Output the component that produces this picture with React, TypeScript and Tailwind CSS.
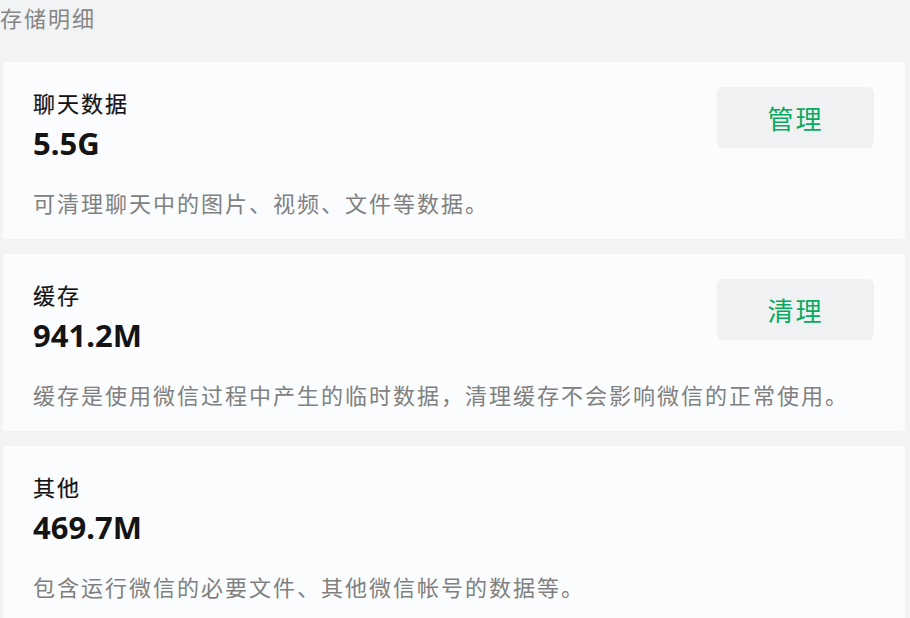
import React from 'react';

type Item = {
    title: string;
    size: string;
    desc: string;
    action?: string;
};

const items: Item[] = [
    {title: '聊天数据', size: '5.5G', desc: '可清理聊天中的图片、视频、文件等数据。', action: '管理'},
    {title: '缓存', size: '941.2M', desc: '缓存是使用微信过程中产生的临时数据，清理缓存不会影响微信的正常使用。', action: '清理'},
    {title: '其他', size: '469.7M', desc: '包含运行微信的必要文件、其他微信帐号的数据等。'},
];

const font = {fontFamily: '"Noto Sans", "Noto Sans CJK SC", sans-serif'};

const StorageCard: React.FC<{item: Item}> = ({item}) => (
    <div className="flex flex-col bg-[#fbfcfe] rounded-[4px] pl-[30px] pr-[31px] pt-[25px] h-[177px]">
        {/* 상단: 제목 + 버튼 */}
        <div className="flex justify-between items-start">
            <div className="flex flex-col">
                <div className="mt-[1px] text-[22px] leading-[30px] tracking-[2px] text-[#141416] [-webkit-text-stroke:0.2px_#141416]">{item.title}</div>
                <div className="mt-[7px] text-[31px] leading-[36px] font-bold text-[#141414]">{item.size}</div>
            </div>
            {item.action && (
                <button className="w-[157px] h-[61px] shrink-0 rounded-[6px] bg-[#f0f1f3] pt-[3px] text-[26px] leading-[58px] tracking-[2px] text-[#0aa960]">
                    {item.action}
                </button>
            )}
        </div>
        <div className="mt-[27px] text-[22px] leading-[30px] tracking-[2px] text-[#808080] whitespace-nowrap">{item.desc}</div>
    </div>
);

const App: React.FC = () => {
    return (
        <div className="w-[910px] h-[618px] overflow-hidden bg-[#f2f3f5] pl-[3px] pr-[5px]" style={font}>
            <div className="-ml-[3px] pt-[3px] h-[62px] text-[22px] leading-[30px] tracking-[2px] text-[#858585]">存储明细</div>
            <div className="flex flex-col gap-[15px]">
                {items.map((item) => (
                    <StorageCard key={item.title} item={item}/>
                ))}
            </div>
        </div>
    );
};

export default App;
